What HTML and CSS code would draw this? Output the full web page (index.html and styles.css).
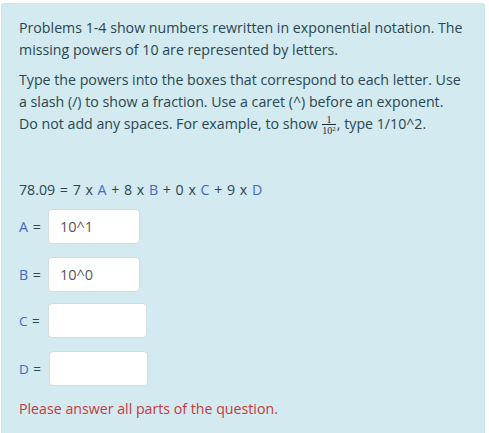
FILE: index.html
```html
<!DOCTYPE html>
<html>
<head>
<meta charset="utf-8">
<link rel="stylesheet" href="styles.css">
</head>
<body>
<div class="panel">
  <p class="intro">Problems 1-4 show numbers rewritten in exponential notation. The<br>missing powers of 10 are represented by letters.</p>
  <p class="instr">Type the powers into the boxes that correspond to each letter. Use<br>a slash (/) to show a fraction. Use a caret (^) before an exponent.<br>Do not add any spaces. For example, to show <span class="frac"><span class="num">1</span><span class="den">10<sup>2</sup></span></span>, type 1/10^2.</p>
  <p class="eq">78.09 = 7 x <span class="v">A</span> + 8 x <span class="v">B</span> + 0 x <span class="v">C</span> + 9 x <span class="v">D</span></p>
  <div class="rows">
    <div class="row"><span class="lbl"><span class="v">A</span> =</span><span class="box w92">10^1</span></div>
    <div class="row"><span class="lbl"><span class="v">B</span> =</span><span class="box w92">10^0</span></div>
    <div class="row"><span class="lbl sm"><span class="v">C</span> =</span><span class="box w98"></span></div>
    <div class="row"><span class="lbl sm wide"><span class="v">D</span> =</span><span class="box w98"></span></div>
  </div>
  <p class="err">Please answer all parts of the question.</p>
</div>
</body>
</html>
```
FILE: styles.css
```css
html, body {
  margin: 0;
  padding: 0;
  background: #ffffff;
}
body {
  font-family: "Open Sans", "Noto Sans", sans-serif;
  font-size: 14.2px;
  color: #2b4650;
  overflow: hidden;
}
.panel {
  margin: 3px 4px 0 1px;
  background: #d2eaf0;
  border: 1px solid #c9e6ec;
  border-bottom: none;
  border-radius: 3px 3px 0 0;
  padding: 13px 10px 40px 17px;
}
p {
  margin: 0;
  line-height: 22px;
  white-space: nowrap;
}
.intro {
  margin-bottom: 8px;
}
.frac {
  display: inline-block;
  vertical-align: -5px;
  font-family: "Liberation Serif", serif;
  font-size: 10px;
  line-height: 9px;
  color: #1e2a2f;
  margin: 0 1px;
  text-align: center;
}
.frac .num {
  display: block;
  border-bottom: 1px solid #1e2a2f;
  padding: 0 1px;
}
.frac .den {
  display: block;
  padding-top: 1px;
}
.frac .den sup {
  font-size: 7px;
  vertical-align: 3px;
  line-height: 0;
}
.eq {
  margin-top: 44px;
  word-spacing: 1px;
}
.v {
  color: #4169c6;
}
.rows {
  display: flex;
  flex-direction: column;
  margin-top: 8px;
}
.row {
  display: flex;
  align-items: center;
  height: 35px;
  margin-bottom: 13px;
}
.row:nth-child(2) { margin-bottom: 11px; }
.lbl {
  width: 29px;
  word-spacing: 1px;
}
.lbl.sm { font-size: 13.5px; width: 29px; }
.lbl.wide { width: 30px; }
.box {
  box-sizing: border-box;
  height: 35px;
  background: #ffffff;
  border: 1px solid #d6dcde;
  border-radius: 4px;
  padding-left: 11px;
  display: flex;
  align-items: center;
  color: #555a5e;
  font-size: 14.5px;
}
.w92 { width: 92px; }
.w98 { width: 99px; }
.err {
  margin-top: -1px;
  color: #c8393c;
}
```
